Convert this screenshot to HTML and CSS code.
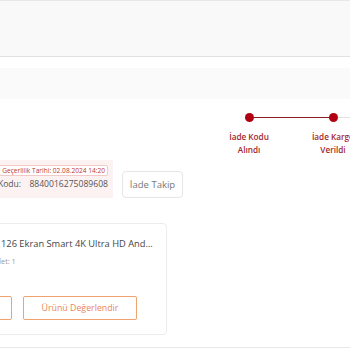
FILE: index.html
```html
<!DOCTYPE html>
<html lang="tr">
<head>
<meta charset="UTF-8" />
<meta name="viewport" content="width=device-width, initial-scale=1" />
<title>İade Takip</title>
<link rel="stylesheet" href="styles.css">
</head>
<body>

<div class="top-bar"></div>
<div class="sub-bar"></div>

<div class="steps">
  <div class="step">
    <div class="step-track">
      <span class="seg off"></span>
      <span class="dot"></span>
      <span class="seg"></span>
    </div>
    <div class="step-label">İade Kodu<br />Alındı</div>
  </div>
  <div class="step">
    <div class="step-track">
      <span class="seg"></span>
      <span class="dot"></span>
      <span class="seg todo"></span>
    </div>
    <div class="step-label">İade Kargo<br />Verildi</div>
  </div>
</div>

<div class="code-row">
  <div class="code-box">
    <span class="code-tag">Geçerlilik Tarihi: 02.08.2024 14:20</span>
    <div class="code-line">İade Kodu: <span class="code-num">8840016275089608</span></div>
  </div>
  <button class="track-btn">İade Takip</button>
</div>

<div class="card">
  <div class="card-body">
    <div class="product-name">126 Ekran Smart 4K Ultra HD Android TV</div>
    <div class="product-qty">Adet: 1</div>
    <div class="actions">
      <button class="outline-btn wide">Tekrar Satın Al</button>
      <button class="outline-btn">Ürünü Değerlendir</button>
    </div>
  </div>
</div>

<div class="bottom-line"></div>

</body>
</html>
```

FILE: styles.css
```css
body {
  margin: 0;
  width: 350px;
  height: 350px;
  overflow: hidden;
  background: #fff;
  font-family: 'Open Sans', sans-serif;
  color: #444;
}
.top-bar {
  height: 55px;
  background: #f9f9f9;
  border-top: 1px solid #e8e8e8;
  border-bottom: 1px solid #e2e2e2;
}
.sub-bar {
  margin-top: 11px;
  height: 31px;
  background: #fafafa;
}

/* adimlar */
.steps {
  display: flex;
  margin: 14px 0 0 207px;
}
.step {
  flex: 0 0 84px;
  text-align: center;
}
.step-track {
  display: flex;
  align-items: center;
  height: 9px;
}
.seg {
  flex: 1;
  height: 1.5px;
  background: #8e1b1f;
}
.seg.off {
  background: transparent;
}
.seg.todo {
  background: #e2e2e2;
}
.dot {
  width: 9px;
  height: 9px;
  border-radius: 50%;
  background: #b10012;
}
.step-label {
  margin-top: 8px;
  font-size: 8.2px;
  line-height: 13px;
  font-weight: 600;
  color: #a3262a;
  white-space: nowrap;
}

/* iade kodu */
.code-row {
  display: flex;
  align-items: flex-end;
  margin-top: 4px;
}
.code-box {
  box-sizing: border-box;
  width: 173px;
  margin-left: -60px;
  padding: 5px 5px 8px 0;
  background: #fdf2f2;
  display: flex;
  flex-direction: column;
  align-items: flex-end;
}
.code-tag {
  font-size: 6.6px;
  line-height: 9px;
  padding: 0 2px;
  color: #c0392b;
  background: #fff;
  border: 1px solid #f3caca;
  border-radius: 2px;
}
.code-line {
  font-size: 8.6px;
  line-height: 12px;
  color: #555;
  margin-top: 2px;
}
.code-num {
  margin-left: 6px;
}
.track-btn {
  box-sizing: border-box;
  width: 61px;
  height: 27px;
  margin-left: 9px;
  padding: 0;
  font-family: inherit;
  font-size: 9.5px;
  color: #777;
  background: #fff;
  border: 1px solid #e6e6e6;
  border-radius: 4px;
}

/* urun karti */
.card {
  box-sizing: border-box;
  width: 227px;
  height: 112px;
  margin: 25px 0 0 -60px;
  border: 1px solid #ececec;
  border-radius: 4px;
}
.card-body {
  padding: 13px 12px 0 51px;
}
.product-name {
  font-size: 9.3px;
  line-height: 14px;
  text-indent: 9px;
  color: #444;
  white-space: nowrap;
  overflow: hidden;
  text-overflow: ellipsis;
}
.product-qty {
  margin-top: 5px;
  font-size: 7.3px;
  line-height: 10px;
  color: #999;
}
.actions {
  display: flex;
  gap: 11px;
  margin: 30px 0 0 -79px;
}
.outline-btn {
  box-sizing: border-box;
  width: 114px;
  height: 24px;
  padding: 0;
  font-family: inherit;
  font-size: 8.8px;
  color: #e8875a;
  background: #fff;
  border: 1px solid #f0a36e;
  border-radius: 2px;
}
.outline-btn.wide {
  width: 99px;
}
.bottom-line {
  margin-top: 12px;
  border-top: 1px solid #e8e8e8;
}
```
